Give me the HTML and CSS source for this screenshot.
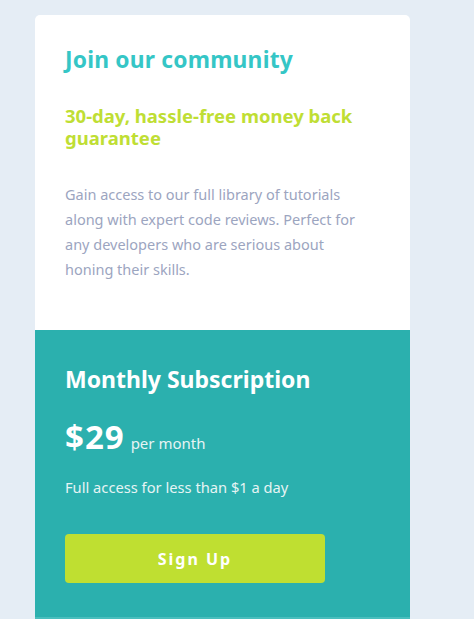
FILE: index.html
```html
<!DOCTYPE html>
<html lang="en">
<head>
<meta charset="utf-8">
<title>Single price grid component</title>
<link rel="stylesheet" href="styles.css">
</head>
<body>
<main class="card">
  <section class="intro">
    <h1 class="title">Join our community</h1>
    <h2 class="subtitle">30-day, hassle-free money back guarantee</h2>
    <p class="desc">Gain access to our full library of tutorials along with expert code reviews. Perfect for any developers who are serious about honing their skills.</p>
  </section>
  <section class="sub">
    <h2 class="sub-title">Monthly Subscription</h2>
    <div class="price"><span class="amount">$29</span><span class="per">per month</span></div>
    <p class="sub-note">Full access for less than $1 a day</p>
    <button class="signup">Sign Up</button>
  </section>
  <section class="why">
    <h2 class="why-title">Why Us</h2>
    <ul class="why-list">
      <li>Tutorials by industry experts</li>
      <li>Peer &amp; expert code review</li>
      <li>Coding exercises</li>
      <li>Access to our GitHub repos</li>
      <li>Community forum</li>
      <li>Flashcard decks</li>
      <li>New videos every week</li>
    </ul>
  </section>
</main>
</body>
</html>
```
FILE: styles.css
```css
html, body {
  margin: 0;
  padding: 0;
}
body {
  background: #e5edf5;
  font-family: "Noto Sans", "Open Sans", sans-serif;
  padding: 15px 0 60px;
}
.card {
  width: 375px;
  margin-left: 35px;
  border-radius: 5px;
  overflow: hidden;
  background: #fff;
}
.intro {
  padding: 32px 30px 48px;
}
.title {
  margin: 0;
  font-size: 22.8px;
  font-weight: 700;
  line-height: 26px;
  color: #35c6c6;
  letter-spacing: 0.2px;
}
.subtitle {
  margin: 32px 0 0;
  font-size: 18.5px;
  font-weight: 700;
  line-height: 22px;
  color: #bfde34;
}
.desc {
  margin: 33px 0 0;
  max-width: 308px;
  font-size: 14.5px;
  line-height: 25px;
  color: #9ca5bf;
}
.sub {
  background: #2bb0ae;
  color: #fff;
  padding: 36px 30px 34px;
}
.sub-title {
  margin: 0;
  font-size: 23px;
  font-weight: 700;
  line-height: 26px;
}
.price {
  margin-top: 27px;
  display: flex;
  align-items: baseline;
  gap: 6px;
}
.amount {
  font-size: 33px;
  font-weight: 700;
  line-height: 36px;
  letter-spacing: 1px;
}
.per {
  font-size: 15px;
  color: #e6f4f4;
}
.sub-note {
  margin: 22px 0 0;
  font-size: 14.7px;
  line-height: 20px;
  color: #e6f4f4;
}
.signup {
  margin-top: 37px;
  width: 260px;
  height: 49px;
  border: 0;
  border-radius: 4px;
  background: #bfdf31;
  color: #fff;
  font-family: inherit;
  font-size: 16px;
  font-weight: 700;
  letter-spacing: 2px;
}
.why {
  background: #4abebd;
  color: #fff;
  padding: 30px;
}
.why-title {
  margin: 0 0 16px;
  font-size: 20px;
}
.why-list {
  margin: 0;
  padding: 0;
  list-style: none;
  font-size: 14px;
  line-height: 20px;
  color: #d9f0f0;
}
```
